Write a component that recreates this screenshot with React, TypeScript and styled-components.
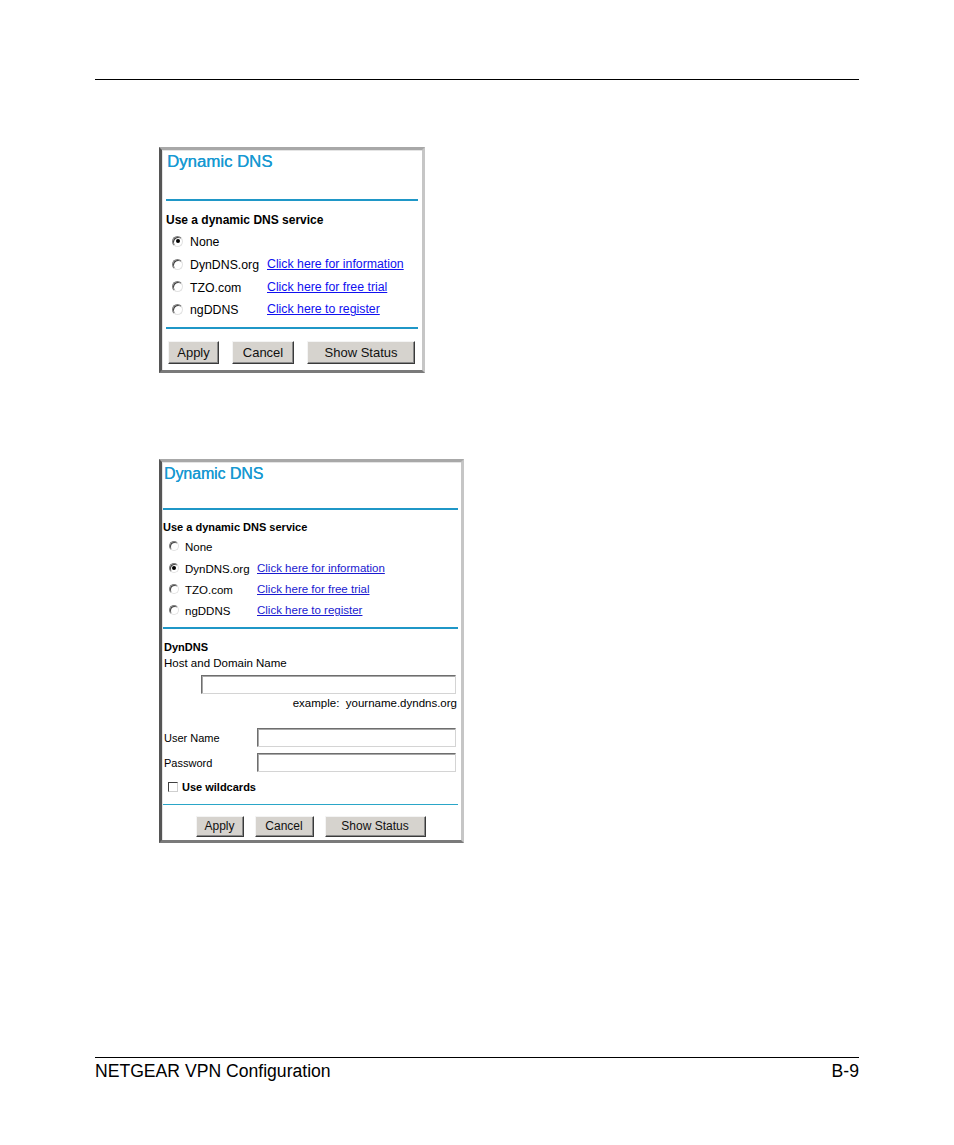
import React from 'react';
import styled, { createGlobalStyle, ThemeProvider } from 'styled-components';

const GlobalStyle = createGlobalStyle`
  html, body {
    margin: 0;
    padding: 0;
    background: #fff;
  }
  body {
    font-family: 'Liberation Sans', Arial, Helvetica, sans-serif;
    color: #000;
  }
`;

// metrics for the two screenshots (the second one is a bit smaller)
const bigShot = {
  padL: 4,
  padR: 4,
  padB: 6,
  title: 16.8,
  titleLh: 20,
  titleGap: 27,
  head: 12,
  headLh: 16,
  headTop: 11,
  text: 12.3,
  row: 22.7,
  radio: 11,
  radioGap: 7,
  labelW: 77,
  link: '#1010f0',
  btn: 13,
  btnH: 23,
  btnTop: 12,
  btnGap: 13,
  btnAlign: 'flex-start',
  btnPad: 2,
};

const smallShot = {
  padL: 1,
  padR: 3,
  padB: 3,
  title: 15.8,
  titleLh: 19,
  titleGap: 25,
  head: 11,
  headLh: 14,
  headTop: 10,
  text: 11.5,
  row: 21.3,
  radio: 10,
  radioGap: 6,
  labelW: 72,
  link: '#1a1ad0',
  btn: 12,
  btnH: 21,
  btnTop: 11,
  btnGap: 11,
  btnAlign: 'center',
  btnPad: 0,
};

type Service = { name: string; link?: string };

const services: Service[] = [
  { name: 'None' },
  { name: 'DynDNS.org', link: 'Click here for information' },
  { name: 'TZO.com', link: 'Click here for free trial' },
  { name: 'ngDDNS', link: 'Click here to register' },
];

function Buttons({ widths }: { widths: number[] }) {
  const labels = ['Apply', 'Cancel', 'Show Status'];
  return (
    <ButtonRow>
      {labels.map((l, i) => (
        <Button key={l} $w={widths[i]}>
          {l}
        </Button>
      ))}
    </ButtonRow>
  );
}

function ServiceList({ checked }: { checked: number }) {
  return (
    <>
      <Heading>Use a dynamic DNS service</Heading>
      <Rows>
        {services.map((s, i) => (
          <OptionRow key={s.name}>
            <Radio $on={i === checked} />
            <OptionLabel>{s.name}</OptionLabel>
            {s.link && <LinkText>{s.link}</LinkText>}
          </OptionRow>
        ))}
      </Rows>
    </>
  );
}

function App() {
  return (
    <Page>
      <GlobalStyle />
      <TopRule />
      <ThemeProvider theme={bigShot}>
        <Frame $w={266} $top={67}>
          <Title>Dynamic DNS</Title>
          <BlueRule />
          <ServiceList checked={0} />
          <BlueRule $top={6} />
          <Buttons widths={[51, 62, 108]} />
        </Frame>
      </ThemeProvider>
      <ThemeProvider theme={smallShot}>
        <Frame $w={305} $top={86}>
          <Title>Dynamic DNS</Title>
          <BlueRule />
          <ServiceList checked={1} />
          <BlueRule $top={6} />
          <SubHead>DynDNS</SubHead>
          <PlainLine $top={2}>Host and Domain Name</PlainLine>
          <HostRow>
            <TextBox $w={255} />
          </HostRow>
          <Example>example:&nbsp; yourname.dyndns.org</Example>
          <FieldRow $top={18}>
            <FieldLabel>User Name</FieldLabel>
            <TextBox $w={199} />
          </FieldRow>
          <FieldRow $top={6}>
            <FieldLabel>Password</FieldLabel>
            <TextBox $w={199} />
          </FieldRow>
          <CheckRow>
            <CheckBox />
            <CheckLabel>Use wildcards</CheckLabel>
          </CheckRow>
          <BlueRule $top={10} $thin />
          <Buttons widths={[48, 59, 101]} />
        </Frame>
      </ThemeProvider>
      <FooterRule />
      <Footer>
        <span>NETGEAR VPN Configuration</span>
        <span>B-9</span>
      </Footer>
    </Page>
  );
}
export default App;

const Page = styled.div`
  width: 954px;
  height: 1145px;
  box-sizing: border-box;
  padding: 0 95px 64px;
  display: flex;
  flex-direction: column;
`;

const TopRule = styled.div`
  margin-top: 79px;
  height: 1px;
  background: #000;
`;

const FooterRule = styled.div`
  margin-top: auto;
  height: 1px;
  background: #000;
`;

const Footer = styled.div`
  margin-top: 3px;
  display: flex;
  justify-content: space-between;
  font-family: 'Liberation Sans', Arial, Helvetica, sans-serif;
  font-size: 17.6px;
  line-height: 20px;
  color: #000;
`;

const Frame = styled.div<{ $w: number; $top: number }>`
  width: ${p => p.$w}px;
  margin: ${p => p.$top}px 0 0 64px;
  box-sizing: border-box;
  border: 3px solid;
  border-color: #a8a8a8 #c6c6c6 #7a7a7a #555;
  box-shadow: inset 1px 1px 0 #e4e4e4;
  background: #fff;
  padding: 2px ${p => p.theme.padR}px ${p => p.theme.padB}px ${p => p.theme.padL}px;
  display: flex;
  flex-direction: column;
`;

const Title = styled.div`
  font-size: ${p => p.theme.title}px;
  line-height: ${p => p.theme.titleLh}px;
  color: #1799d2;
  text-shadow: 0.3px 0 0 #1799d2;
  margin-bottom: ${p => p.theme.titleGap}px;
  padding-left: 1px;
`;

const BlueRule = styled.div<{ $top?: number; $thin?: boolean }>`
  margin-top: ${p => p.$top ?? 0}px;
  height: ${p => (p.$thin ? 1 : 2)}px;
  background: ${p => (p.$thin ? '#2aa6c8' : '#1f97c7')};
`;

const Heading = styled.div`
  margin-top: ${p => p.theme.headTop}px;
  font-size: ${p => p.theme.head}px;
  line-height: ${p => p.theme.headLh}px;
  font-weight: 700;
`;

const Rows = styled.div`
  margin-top: 2px;
  display: flex;
  flex-direction: column;
`;

const OptionRow = styled.div`
  height: ${p => p.theme.row}px;
  display: flex;
  align-items: center;
  font-size: ${p => p.theme.text}px;
`;

const Radio = styled.span<{ $on: boolean }>`
  position: relative;
  box-sizing: border-box;
  margin-left: 6px;
  margin-right: ${p => p.theme.radioGap}px;
  width: ${p => p.theme.radio}px;
  height: ${p => p.theme.radio}px;
  border-radius: 50%;
  border: 1px solid;
  border-color: #7c7c7c #e2e2e2 #e2e2e2 #7c7c7c;
  box-shadow: inset 1px 1px 0 #444;
  background: #fff;
  flex-shrink: 0;
  &::after {
    content: '';
    display: ${p => (p.$on ? 'block' : 'none')};
    position: absolute;
    left: 50%;
    top: 50%;
    width: 4px;
    height: 4px;
    margin: -2px 0 0 -2px;
    border-radius: 50%;
    background: #000;
  }
`;

const OptionLabel = styled.span`
  width: ${p => p.theme.labelW}px;
  flex-shrink: 0;
  padding-top: 2px;
`;

const LinkText = styled.span`
  color: ${p => p.theme.link};
  text-decoration: underline;
`;

const ButtonRow = styled.div`
  margin-top: ${p => p.theme.btnTop}px;
  padding-left: ${p => p.theme.btnPad}px;
  display: flex;
  justify-content: ${p => p.theme.btnAlign};
  gap: ${p => p.theme.btnGap}px;
`;

const Button = styled.div<{ $w: number }>`
  width: ${p => p.$w}px;
  height: ${p => p.theme.btnH}px;
  box-sizing: border-box;
  display: flex;
  align-items: center;
  justify-content: center;
  background: #d6d3ce;
  border: 1px solid;
  border-color: #f4f4f4 #3a3a3a #3a3a3a #f4f4f4;
  box-shadow: inset -1px -1px 0 #8a8a8a;
  font-size: ${p => p.theme.btn}px;
  color: #111;
`;

const SubHead = styled.div`
  margin-top: 11px;
  padding-left: 1px;
  font-size: 11px;
  line-height: 14px;
  font-weight: 700;
`;

const PlainLine = styled.div<{ $top: number }>`
  margin-top: ${p => p.$top}px;
  padding-left: 1px;
  font-size: 11.5px;
  line-height: 14px;
`;

const HostRow = styled.div`
  margin-top: 5px;
  padding-left: 38px;
  display: flex;
`;

const TextBox = styled.div<{ $w: number }>`
  width: ${p => p.$w}px;
  height: 19px;
  box-sizing: border-box;
  border: 1px solid;
  border-color: #6e6e6e #d4d4d4 #d4d4d4 #6e6e6e;
  box-shadow: inset 1px 1px 0 #a8a8a8;
  background: #fff;
`;

const Example = styled.div`
  margin-top: 2px;
  padding-right: 1px;
  text-align: right;
  font-size: 11.5px;
  line-height: 14px;
`;

const FieldRow = styled.div<{ $top: number }>`
  margin-top: ${p => p.$top}px;
  display: flex;
  align-items: center;
`;

const FieldLabel = styled.span`
  width: 94px;
  padding-left: 1px;
  box-sizing: border-box;
  font-size: 11px;
  padding-top: 2px;
`;

const CheckRow = styled.div`
  margin-top: 8px;
  height: 14px;
  display: flex;
  align-items: center;
  padding-left: 5px;
  gap: 4px;
`;

const CheckBox = styled.span`
  width: 10px;
  height: 10px;
  box-sizing: border-box;
  border: 1px solid;
  border-color: #404040 #cfcfcf #cfcfcf #404040;
  background: #fff;
`;

const CheckLabel = styled.span`
  font-size: 11px;
  font-weight: 700;
`;
